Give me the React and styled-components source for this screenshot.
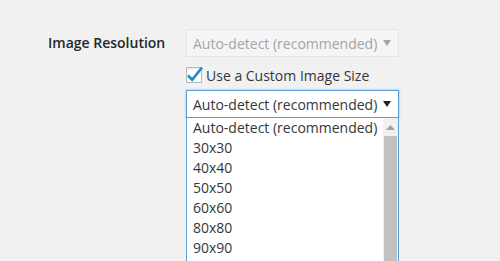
import React from 'react';
import styled, { createGlobalStyle } from 'styled-components';

const GlobalStyle = createGlobalStyle`
    html, body {
        margin: 0;
        padding: 0;
        background: #f1f1f1;
        font-family: "Open Sans", "Liberation Sans", sans-serif;
        font-size: 14px;
        color: #32373c;
    }
`;

const Page = styled.div`
    height: 261px;
    overflow: hidden;
    padding: 29px 0 0 48px;
    box-sizing: border-box;
`;

const Row = styled.div`
    display: flex;
`;

const Label = styled.div`
    width: 138px;
    font-weight: 600;
    color: #23282d;
    line-height: 28px;
`;

const Fields = styled.div`
    display: flex;
    flex-direction: column;
    width: 213px;
`;

const Select = styled.div`
    position: relative;
    display: flex;
    align-items: center;
    justify-content: space-between;
    box-sizing: border-box;
    height: 28px;
    padding: 0 6px;
    border: 1px solid ${p => (p.$open ? '#5b9dd9' : '#e4e4e4')};
    background: ${p => (p.$disabled ? '#f5f5f5' : '#fff')};
    color: ${p => (p.$disabled ? '#a0a5aa' : '#32373c')};
    box-shadow: ${p => (p.$open ? '0 0 2px rgba(30,140,190,.5)' : 'none')};
    white-space: nowrap;
`;

const Arrow = styled.svg`
    width: 8px;
    height: 6px;
    fill: ${p => (p.$disabled ? '#a0a5aa' : '#222')};
    margin-right: 1px;
`;

const CheckRow = styled.label`
    display: flex;
    align-items: center;
    gap: 4px;
    height: 20px;
    margin: 8px 0 5px;
    color: #32373c;
`;

const Box = styled.span`
    position: relative;
    width: 14px;
    height: 14px;
    border: 1px solid #b4b9be;
    background: #fff;
    box-shadow: inset 0 1px 2px rgba(0,0,0,.1);
    svg {
        position: absolute;
        left: -2px;
        top: -3px;
    }
`;

const Dropdown = styled.div`
    position: relative;
    width: 213px;
`;

const List = styled.div`
    position: absolute;
    top: 27px;
    left: 0;
    width: 213px;
    height: 160px;
    box-sizing: border-box;
    border: 1px solid #5b9dd9;
    background: #fff;
    display: flex;
`;

const Options = styled.div`
    flex: 1;
`;

const Option = styled.div`
    height: 20px;
    line-height: 20px;
    padding-left: 6px;
    color: #32373c;
    white-space: nowrap;
`;

const Scrollbar = styled.div`
    width: 15px;
    background: #f1f1f1;
    display: flex;
    flex-direction: column;
    align-items: center;
`;

const ScrollUp = styled.svg`
    width: 9px;
    height: 5px;
    margin: 7px 0 6px;
    fill: #a3a3a3;
`;

const Thumb = styled.div`
    width: 13px;
    flex: 1;
    background: #c1c1c1;
`;

const sizes = ['Auto-detect (recommended)', '30x30', '40x40', '50x50', '60x60', '80x80', '90x90'];

const DownArrow = ({ disabled }) => (
    <Arrow $disabled={disabled} viewBox="0 0 8 6"><path d="M0 0h8L4 6z" /></Arrow>
);

const App = () => (
    <>
        <GlobalStyle />
        <Page>
            <Row>
                <Label>Image Resolution</Label>
                <Fields>
                    <Select $disabled>
                        <span>Auto-detect (recommended)</span>
                        <DownArrow disabled />
                    </Select>
                    <CheckRow>
                        <Box>
                            <svg width="20" height="19" viewBox="0 0 20 19">
                                <path d="M3 10.5l4.2 4.2L17 2.5" fill="none" stroke="#1e8cbe" strokeWidth="2.6" />
                            </svg>
                        </Box>
                        Use a Custom Image Size
                    </CheckRow>
                    <Dropdown>
                        <Select $open>
                            <span>Auto-detect (recommended)</span>
                            <DownArrow />
                        </Select>
                        <List>
                            <Options>
                                {sizes.map(s => <Option key={s}>{s}</Option>)}
                            </Options>
                            <Scrollbar>
                                <ScrollUp viewBox="0 0 9 5"><path d="M0 5L4.5 0 9 5z" /></ScrollUp>
                                <Thumb />
                            </Scrollbar>
                        </List>
                    </Dropdown>
                </Fields>
            </Row>
        </Page>
    </>
);

export default App;
